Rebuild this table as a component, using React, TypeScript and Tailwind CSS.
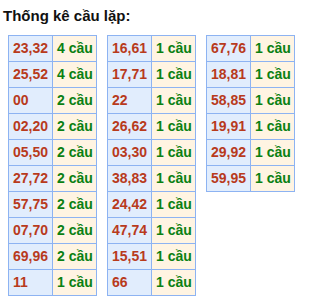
import React from "react";

const t1: [string, number][] = [
  ["23,32", 4], ["25,52", 4], ["00", 2], ["02,20", 2], ["05,50", 2],
  ["27,72", 2], ["57,75", 2], ["07,70", 2], ["69,96", 2], ["11", 1],
];
const t2: [string, number][] = [
  ["16,61", 1], ["17,71", 1], ["22", 1], ["26,62", 1], ["03,30", 1],
  ["38,83", 1], ["24,42", 1], ["47,74", 1], ["15,51", 1], ["66", 1],
];
const t3: [string, number][] = [
  ["67,76", 1], ["18,81", 1], ["58,85", 1], ["19,91", 1], ["29,92", 1], ["59,95", 1],
];

function Table({ rows }: { rows: [string, number][] }) {
  return (
    <div className="grid grid-cols-[44px_44px] border-t border-l border-[#8db3f2] self-start">
      {rows.map(([n, c], i) => (
        <React.Fragment key={i}>
          <div className="h-[26px] border-r border-b border-[#8db3f2] bg-[#e1edfd] pl-[4px] flex items-center text-[14px] font-bold text-[#b83a1c] whitespace-nowrap">
            {n}
          </div>
          <div className="h-[26px] border-r border-b border-[#8db3f2] bg-[#fff4e2] pl-[4px] flex items-center text-[14px] font-bold text-[#0a8012] whitespace-nowrap">
            {c} cầu
          </div>
        </React.Fragment>
      ))}
    </div>
  );
}

export default function App() {
  return (
    <div className="w-[335px] h-[305px] bg-white" style={{ fontFamily: '"Liberation Sans", Arial, sans-serif' }}>
      <div className="pl-[3px] pt-[7px] h-[35px] text-[15px] font-bold text-[#111] leading-[18px]">
        Thống kê cầu lặp:
      </div>
      <div className="flex gap-[10px] pl-[8px]">
        <Table rows={t1} />
        <Table rows={t2} />
        <Table rows={t3} />
      </div>
    </div>
  );
}
